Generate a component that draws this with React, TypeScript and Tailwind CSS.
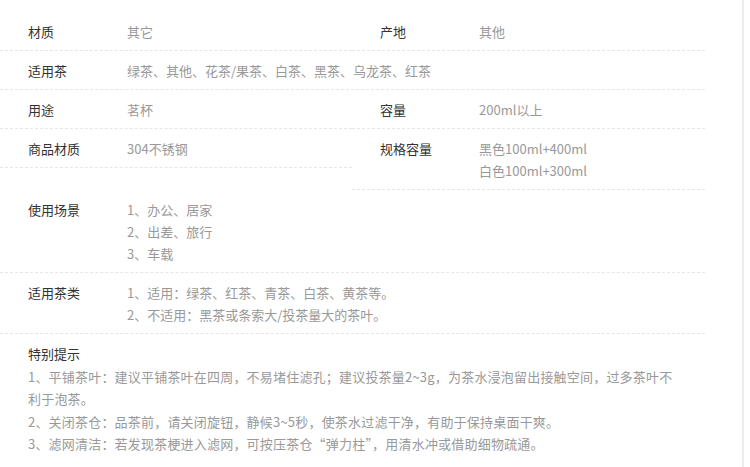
import React from 'react';

interface Attr {
  label: string;
  values: string[];
}

const Cell: React.FC<{ item: Attr; className?: string }> = ({ item, className = '' }) => (
  <div className={`flex pt-[9px] pb-[7px] pl-[28px] border-b border-dashed border-[#e6e6e6] ${className}`}>
    <div className="w-[99px] shrink-0 text-[#333]">{item.label}</div>
    <div className="text-[#999]">
      {item.values.map((v, i) => <div key={i}>{v}</div>)}
    </div>
  </div>
);

const tips = [
  '1、平铺茶叶：建议平铺茶叶在四周，不易堵住滤孔；建议投茶量2~3g，为茶水浸泡留出接触空间，过多茶叶不',
  '利于泡茶。',
  '2、关闭茶仓：品茶前，请关闭旋钮，静候3~5秒，使茶水过滤干净，有助于保持桌面干爽。',
  '3、滤网清洁：若发现茶梗进入滤网，可按压茶仓“弹力柱”，用清水冲或借助细物疏通。',
];

export default function App() {
  return (
    <div
      lang="zh-CN"
      className="w-[750px] h-[467px] bg-white flex overflow-hidden text-[13px] leading-[22px]"
      style={{ fontFamily: '"Microsoft YaHei", "Noto Sans CJK SC", "Noto Sans", sans-serif' }}
    >
      <div className="w-[705px] pt-[12px] shrink-0">
        <div className="flex">
          <Cell item={{ label: '材质', values: ['其它'] }} className="w-[352px]" />
          <Cell item={{ label: '产地', values: ['其他'] }} className="flex-1" />
        </div>
        <Cell item={{ label: '适用茶', values: ['绿茶、其他、花茶/果茶、白茶、黑茶、乌龙茶、红茶'] }} />
        <div className="flex">
          <Cell item={{ label: '用途', values: ['茗杯'] }} className="w-[352px]" />
          <Cell item={{ label: '容量', values: ['200ml以上'] }} className="flex-1" />
        </div>
        <div className="flex items-start">
          <Cell item={{ label: '商品材质', values: ['304不锈钢'] }} className="w-[352px]" />
          <Cell item={{ label: '规格容量', values: ['黑色100ml+400ml', '白色100ml+300ml'] }} className="flex-1" />
        </div>
        <Cell item={{ label: '使用场景', values: ['1、办公、居家', '2、出差、旅行', '3、车载'] }} />
        <Cell item={{ label: '适用茶类', values: ['1、适用：绿茶、红茶、青茶、白茶、黄茶等。', '2、不适用：黑茶或条索大/投茶量大的茶叶。'] }} />
        <div className="pl-[28px] pt-[9px] leading-[22.5px]">
          <div className="text-[#333]">特别提示</div>
          {tips.map((t, i) => (
            <div key={i} className="text-[#999] whitespace-nowrap tracking-[0.2px]">{t}</div>
          ))}
        </div>
      </div>
      <div className="flex-1" />
      <div className="w-[2px] h-full bg-[#ededed]" />
      <div className="w-[6px]" />
    </div>
  );
}
